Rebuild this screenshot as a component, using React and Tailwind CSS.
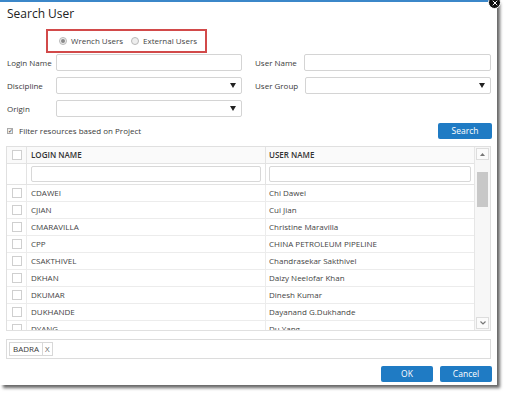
import { X } from "lucide-react";

const rows = [
  ["CDAWEI", "Chi Dawei"],
  ["CJIAN", "Cui Jian"],
  ["CMARAVILLA", "Christine Maravilla"],
  ["CPP", "CHINA PETROLEUM PIPELINE"],
  ["CSAKTHIVEL", "Chandrasekar Sakthivel"],
  ["DKHAN", "Daizy Neelofar Khan"],
  ["DKUMAR", "Dinesh Kumar"],
  ["DUKHANDE", "Dayanand G.Dukhande"],
  ["DYANG", "Du Yang"],
];

function Caret() {
  return (
    <svg width="6" height="5" viewBox="0 0 6 5" className="shrink-0">
      <path d="M0 0h6L3 5z" fill="#222" />
    </svg>
  );
}

function TextBox() {
  return <div className="h-[17px] flex-1 rounded-[2px] border border-[#d4d4d4] bg-white" />;
}

function SelectBox() {
  return (
    <div className="h-[17px] flex-1 rounded-[2px] border border-[#d4d4d4] bg-white flex items-center justify-end pr-[5px]">
      <Caret />
    </div>
  );
}

function Radio({ checked, className = "" }) {
  return (
    <span className={`w-[8px] h-[8px] shrink-0 rounded-full border border-[#b9b9b9] bg-[#eee] flex items-center justify-center ${className}`}>
      {checked && <span className="w-[4px] h-[4px] rounded-full bg-[#8a8a8a]" />}
    </span>
  );
}

function Box() {
  return <span className="block w-[10px] h-[10px] border border-[#cfcfcf] bg-white" />;
}

export default function App() {
  return (
    <div className="w-[511px] h-[400px] bg-white font-['Open_Sans',sans-serif] text-[#3a3a3a] text-[8px]">
      <div className="relative w-[497px] h-[385px] bg-white border-t-2 border-[#3b87c9] shadow-[3px_3px_3px_rgba(0,0,0,0.6)] flex flex-col">
        <span className="absolute -top-[6px] right-[-4px] w-[13px] h-[13px] rounded-full bg-[#111] border border-white flex items-center justify-center">
          <X size={8} color="white" strokeWidth={3} />
        </span>

        <h1 className="pl-[7px] pt-[3px] text-[12px] leading-[18px] text-[#222]">Search User</h1>

        <div className="ml-[46px] mt-[6px] w-[161px] h-[24px] border-2 border-[#d24a4a] flex items-center pl-[11px] gap-[4px] text-[8px] text-[#444] whitespace-nowrap">
          <Radio checked />
          <span>Wrench Users</span>
          <Radio className="ml-[4px]" />
          <span>External Users</span>
        </div>

        <div className="flex flex-col gap-[6px] px-[6px] mt-[1px]">
          <div className="flex items-center">
            <div className="flex items-center w-[236px]">
              <span className="w-[50px] pl-[1px]">Login Name</span>
              <TextBox />
            </div>
            <div className="flex items-center ml-[13px] flex-1">
              <span className="w-[49px]">User Name</span>
              <TextBox />
            </div>
          </div>
          <div className="flex items-center">
            <div className="flex items-center w-[236px]">
              <span className="w-[50px] pl-[1px]">Discipline</span>
              <SelectBox />
            </div>
            <div className="flex items-center ml-[13px] flex-1">
              <span className="w-[50px]">User Group</span>
              <SelectBox />
            </div>
          </div>
          <div className="flex items-center w-[236px]">
            <span className="w-[50px] pl-[1px]">Origin</span>
            <SelectBox />
          </div>
        </div>

        <div className="flex items-center justify-between pl-[7px] pr-[5px] mt-[6px]">
          <div className="flex items-center gap-[6px]">
            <span className="w-[6px] h-[6px] border border-[#aaa] bg-[#eee] flex items-center justify-center text-[6px] leading-none text-[#333]">✓</span>
            <span>Filter resources based on Project</span>
          </div>
          <button className="w-[54px] h-[16px] rounded-[2px] bg-[#1f7bc4] text-white text-[8.5px] leading-none">Search</button>
        </div>

        <div className="mx-[6px] mt-[7px] h-[185px] border border-[#e0e0e0] flex overflow-hidden">
          <div className="flex-1 flex flex-col">
            <div className="h-[17px] shrink-0 flex items-center border-b border-[#e3e3e3] bg-[#fafafa] font-semibold text-[#333]">
              <div className="w-[20px] h-full flex items-center justify-center border-r border-[#e3e3e3]"><Box /></div>
              <div className="w-[239px] h-full flex items-center pl-[4px] border-r border-[#e3e3e3]">LOGIN NAME</div>
              <div className="flex-1 pl-[3px]">USER NAME</div>
            </div>
            <div className="h-[21px] shrink-0 flex items-center border-b border-[#e3e3e3]">
              <div className="w-[20px] h-full border-r border-[#e3e3e3]" />
              <div className="w-[239px] h-full flex items-center px-[4px] border-r border-[#e3e3e3]">
                <div className="h-[16px] flex-1 border border-[#d8d8d8] rounded-[2px]" />
              </div>
              <div className="flex-1 h-full flex items-center px-[3px]">
                <div className="h-[16px] flex-1 border border-[#d8d8d8] rounded-[2px]" />
              </div>
            </div>
            {rows.map(([login, name]) => (
              <div key={login} className="h-[17px] shrink-0 flex items-center border-b border-[#ececec] text-[#444]">
                <div className="w-[20px] h-full flex items-center justify-center border-r border-[#ececec]"><Box /></div>
                <div className="w-[239px] h-full flex items-center pl-[4px] border-r border-[#ececec]">{login}</div>
                <div className="flex-1 pl-[3px]">{name}</div>
              </div>
            ))}
          </div>
          <div className="w-[16px] shrink-0 bg-[#f7f7f7] border-l border-[#e6e6e6] flex flex-col items-center py-[1px]">
            <div className="w-[13px] h-[12px] border border-[#ddd] bg-[#fbfbfb] flex items-center justify-center">
              <svg width="5" height="3" viewBox="0 0 5 3"><path d="M0 3L2.5 0 5 3z" fill="#777" /></svg>
            </div>
            <div className="w-[11px] h-[35px] mt-[12px] bg-[#c8c8c8]" />
            <div className="flex-1" />
            <div className="w-[13px] h-[12px] border border-[#ddd] bg-[#fbfbfb] flex items-center justify-center">
              <svg width="6" height="4" viewBox="0 0 6 4"><path d="M0.5 0.5L3 3 5.5 0.5" fill="none" stroke="#777" strokeWidth="1.2" /></svg>
            </div>
          </div>
        </div>

        <div className="mx-[6px] mt-[8px] h-[20px] border border-[#dcdcdc] flex items-center pl-[2px]">
          <span className="h-[14px] px-[3px] border border-[#d8d8d8] flex items-center">BADRA</span>
          <span className="h-[14px] px-[2px] border border-[#d8d8d8] border-l-0 flex items-center text-[#666]">X</span>
        </div>

        <div className="flex justify-end gap-[7px] pr-[5px] mt-[7px]">
          <button className="w-[52px] h-[16px] rounded-[2px] bg-[#1f7bc4] text-white text-[8.5px] leading-none">OK</button>
          <button className="w-[52px] h-[16px] rounded-[2px] bg-[#1f7bc4] text-white text-[8.5px] leading-none">Cancel</button>
        </div>
      </div>
    </div>
  );
}
